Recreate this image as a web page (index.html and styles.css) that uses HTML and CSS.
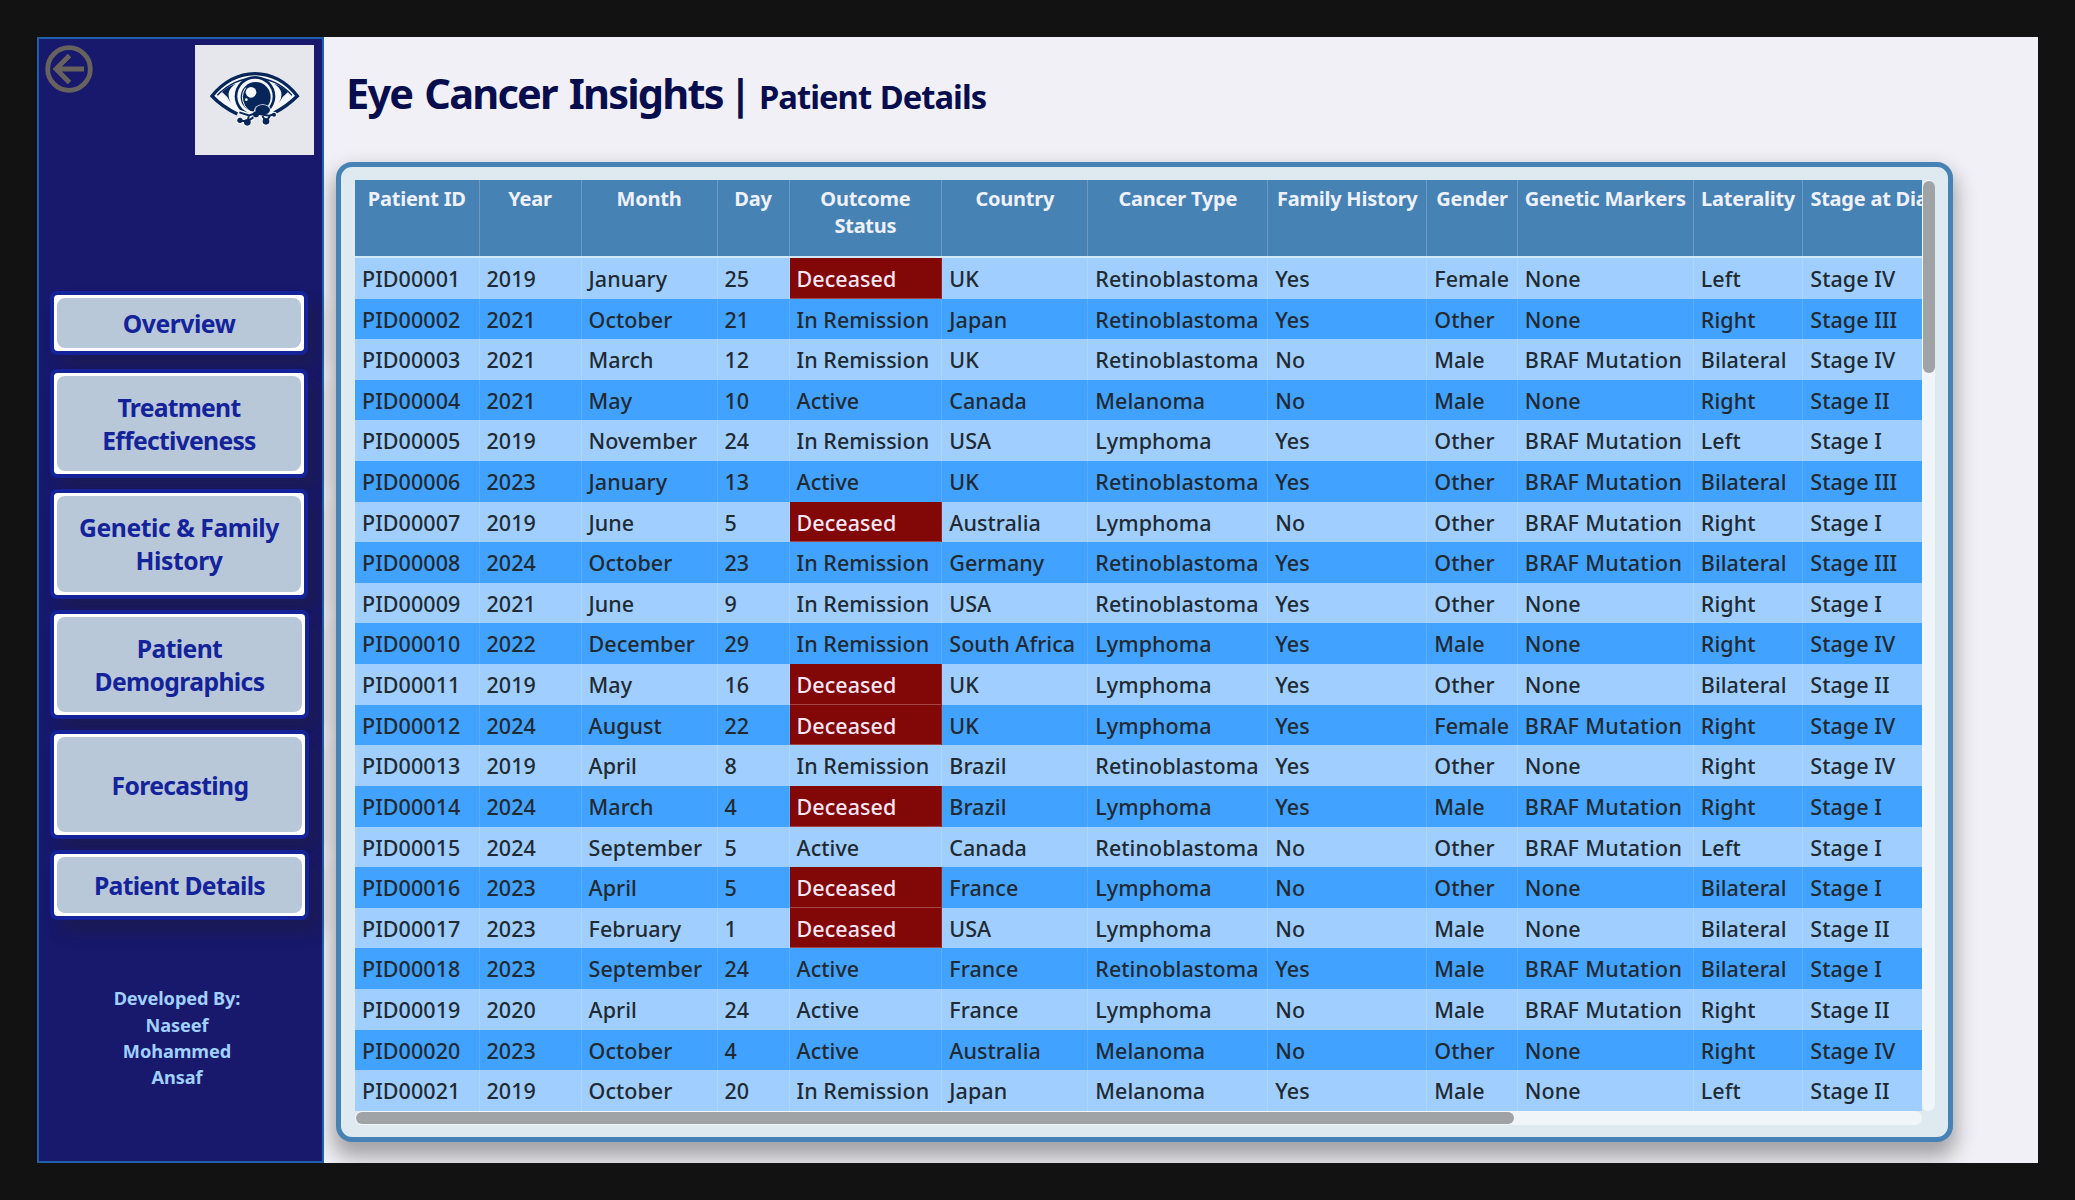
FILE: index.html
```html
<!DOCTYPE html>
<html lang="en">
<head>
<meta charset="utf-8">
<title>Eye Cancer Insights | Patient Details</title>
<link rel="stylesheet" href="styles.css">
</head>
<body>
<div class="report">
  <aside class="sidebar">
    <div class="brand">
      <svg class="back" viewBox="0 0 48 48" width="48" height="48"><circle cx="24" cy="24" r="21.3"/><path d="M39 24H11M24.5 10.5L11 24l13.500 13.500"/></svg>
      <svg class="logo" viewBox="-15 -45 357 330" width="119" height="110">
        <path class="sclera" d="M36 108Q90 42 165 41Q240 42 292 108Q262 138 214 162L165 172L112 162Q66 140 36 108Z"/>
        <path class="lid" d="M112 162Q66 140 36 108Q90 42 165 41Q240 42 292 108Q262 138 222 159"/>
        <path class="crease" d="M52 106Q100 56 165 54Q230 56 276 106"/>
        <path class="navy" d="M66 96Q84 78 108 71Q88 84 86 98Q84 112 93 128Q82 108 66 96Z"/>
        <path class="navy" d="M264 96Q246 78 222 71Q242 84 244 98Q246 112 237 128Q248 108 264 96Z"/>
        <circle class="navy" cx="165" cy="109" r="61"/>
        <circle class="white" cx="165" cy="109" r="53"/>
        <circle class="navy" cx="167" cy="111" r="45"/>
        <path class="rim" d="M137 83Q119 108 134 137Q140 147 150 154"/>
        <circle class="white" cx="153" cy="97" r="16"/>
        <circle class="white" cx="139" cy="119" r="4"/>
        <path class="halo" d="M118 157L147 166L166 160L187 151L207 162L222 163M147 166L143 184M120 182L143 184L160 172M187 168L198 184L210 168"/>
        <g class="white"><circle cx="120" cy="181" r="11"/><circle cx="142" cy="187" r="13"/><circle cx="198" cy="184" r="13"/><circle cx="222" cy="164" r="9"/><ellipse cx="188" cy="153" rx="26" ry="20"/></g>
        <path class="link" d="M118 157L147 166L166 160L207 167L222 163M147 166L143 184M120 182L143 184L160 172M187 168L198 184L210 168"/>
        <g class="navy"><circle cx="120" cy="181" r="8"/><circle cx="142" cy="187" r="10"/><circle cx="198" cy="184" r="10"/><circle cx="222" cy="164" r="6"/><ellipse cx="188" cy="150" rx="22" ry="15"/><circle cx="168" cy="163" r="9"/></g>
      </svg>
    </div>
    <nav class="menu">
      <a class="item single"><span>Overview</span></a>
      <a class="item treatment"><span>Treatment<br>Effectiveness</span></a>
      <a class="item family"><span>Genetic &amp; Family<br>History</span></a>
      <a class="item wide demo"><span>Patient<br>Demographics</span></a>
      <a class="item wide forecast"><span>Forecasting</span></a>
      <a class="item wide details"><span>Patient Details</span></a>
    </nav>
    <p class="credits">Developed By:<br>Naseef<br>Mohammed<br>Ansaf</p>
  </aside>
  <main class="page">
    <h1 class="title"><span class="name">Eye Cancer Insights</span><span class="bar">|</span><span class="sub">Patient Details</span></h1>
    <section class="panel">
      <div class="table">
        <div class="row head"><b>Patient ID</b><b>Year</b><b>Month</b><b>Day</b><b>Outcome<br>Status</b><b>Country</b><b>Cancer Type</b><b>Family History</b><b>Gender</b><b>Genetic Markers</b><b>Laterality</b><b>Stage at Diagnosis</b></div>
        <div class="row"><i>PID00001</i><i>2019</i><i>January</i><i>25</i><i class="dead">Deceased</i><i>UK</i><i>Retinoblastoma</i><i>Yes</i><i>Female</i><i>None</i><i>Left</i><i>Stage IV</i></div>
        <div class="row"><i>PID00002</i><i>2021</i><i>October</i><i>21</i><i>In Remission</i><i>Japan</i><i>Retinoblastoma</i><i>Yes</i><i>Other</i><i>None</i><i>Right</i><i>Stage III</i></div>
        <div class="row"><i>PID00003</i><i>2021</i><i>March</i><i>12</i><i>In Remission</i><i>UK</i><i>Retinoblastoma</i><i>No</i><i>Male</i><i class="braf">BRAF Mutation</i><i>Bilateral</i><i>Stage IV</i></div>
        <div class="row"><i>PID00004</i><i>2021</i><i>May</i><i>10</i><i>Active</i><i>Canada</i><i>Melanoma</i><i>No</i><i>Male</i><i>None</i><i>Right</i><i>Stage II</i></div>
        <div class="row"><i>PID00005</i><i>2019</i><i>November</i><i>24</i><i>In Remission</i><i>USA</i><i>Lymphoma</i><i>Yes</i><i>Other</i><i class="braf">BRAF Mutation</i><i>Left</i><i>Stage I</i></div>
        <div class="row"><i>PID00006</i><i>2023</i><i>January</i><i>13</i><i>Active</i><i>UK</i><i>Retinoblastoma</i><i>Yes</i><i>Other</i><i class="braf">BRAF Mutation</i><i>Bilateral</i><i>Stage III</i></div>
        <div class="row"><i>PID00007</i><i>2019</i><i>June</i><i>5</i><i class="dead">Deceased</i><i>Australia</i><i>Lymphoma</i><i>No</i><i>Other</i><i class="braf">BRAF Mutation</i><i>Right</i><i>Stage I</i></div>
        <div class="row"><i>PID00008</i><i>2024</i><i>October</i><i>23</i><i>In Remission</i><i>Germany</i><i>Retinoblastoma</i><i>Yes</i><i>Other</i><i class="braf">BRAF Mutation</i><i>Bilateral</i><i>Stage III</i></div>
        <div class="row"><i>PID00009</i><i>2021</i><i>June</i><i>9</i><i>In Remission</i><i>USA</i><i>Retinoblastoma</i><i>Yes</i><i>Other</i><i>None</i><i>Right</i><i>Stage I</i></div>
        <div class="row"><i>PID00010</i><i>2022</i><i>December</i><i>29</i><i>In Remission</i><i>South Africa</i><i>Lymphoma</i><i>Yes</i><i>Male</i><i>None</i><i>Right</i><i>Stage IV</i></div>
        <div class="row"><i>PID00011</i><i>2019</i><i>May</i><i>16</i><i class="dead">Deceased</i><i>UK</i><i>Lymphoma</i><i>Yes</i><i>Other</i><i>None</i><i>Bilateral</i><i>Stage II</i></div>
        <div class="row"><i>PID00012</i><i>2024</i><i>August</i><i>22</i><i class="dead">Deceased</i><i>UK</i><i>Lymphoma</i><i>Yes</i><i>Female</i><i class="braf">BRAF Mutation</i><i>Right</i><i>Stage IV</i></div>
        <div class="row"><i>PID00013</i><i>2019</i><i>April</i><i>8</i><i>In Remission</i><i>Brazil</i><i>Retinoblastoma</i><i>Yes</i><i>Other</i><i>None</i><i>Right</i><i>Stage IV</i></div>
        <div class="row"><i>PID00014</i><i>2024</i><i>March</i><i>4</i><i class="dead">Deceased</i><i>Brazil</i><i>Lymphoma</i><i>Yes</i><i>Male</i><i class="braf">BRAF Mutation</i><i>Right</i><i>Stage I</i></div>
        <div class="row"><i>PID00015</i><i>2024</i><i>September</i><i>5</i><i>Active</i><i>Canada</i><i>Retinoblastoma</i><i>No</i><i>Other</i><i class="braf">BRAF Mutation</i><i>Left</i><i>Stage I</i></div>
        <div class="row"><i>PID00016</i><i>2023</i><i>April</i><i>5</i><i class="dead">Deceased</i><i>France</i><i>Lymphoma</i><i>No</i><i>Other</i><i>None</i><i>Bilateral</i><i>Stage I</i></div>
        <div class="row"><i>PID00017</i><i>2023</i><i>February</i><i>1</i><i class="dead">Deceased</i><i>USA</i><i>Lymphoma</i><i>No</i><i>Male</i><i>None</i><i>Bilateral</i><i>Stage II</i></div>
        <div class="row"><i>PID00018</i><i>2023</i><i>September</i><i>24</i><i>Active</i><i>France</i><i>Retinoblastoma</i><i>Yes</i><i>Male</i><i class="braf">BRAF Mutation</i><i>Bilateral</i><i>Stage I</i></div>
        <div class="row"><i>PID00019</i><i>2020</i><i>April</i><i>24</i><i>Active</i><i>France</i><i>Lymphoma</i><i>No</i><i>Male</i><i class="braf">BRAF Mutation</i><i>Right</i><i>Stage II</i></div>
        <div class="row"><i>PID00020</i><i>2023</i><i>October</i><i>4</i><i>Active</i><i>Australia</i><i>Melanoma</i><i>No</i><i>Other</i><i>None</i><i>Right</i><i>Stage IV</i></div>
        <div class="row"><i>PID00021</i><i>2019</i><i>October</i><i>20</i><i>In Remission</i><i>Japan</i><i>Melanoma</i><i>Yes</i><i>Male</i><i>None</i><i>Left</i><i>Stage II</i></div>
      </div>
      <div class="track vertical"><div class="thumb"></div></div>
      <div class="track horizontal"><div class="thumb"></div></div>
    </section>
  </main>
</div>
</body>
</html>
```
FILE: styles.css
```css
* { box-sizing: border-box; }

body {
  margin: 0;
  padding: 37px;
  height: 1200px;
  overflow: hidden;
  background: #121212;
  font-family: "Noto Sans", "Open Sans", sans-serif;
}

.report {
  display: flex;
  width: 2001px;
  height: 1126px;
  overflow: hidden;
  background: #f1f0f6;
}

/* Sidebar */
.sidebar {
  position: relative;
  z-index: 1;
  flex: none;
  width: 287px;
  padding: 6px 8px 0 6px;
  border: 2px solid #1f5fab;
  background: #18186c;
}

.brand {
  display: flex;
  justify-content: space-between;
  height: 110px;
}

.back { fill: none; stroke: #68625f; stroke-width: 4.8; }
.logo { background: #e5e7ec; }
.navy { fill: #06265a; }
.white { fill: #f6f7fb; }
.sclera { fill: #f6f7fb; }
.lid { fill: none; stroke: #06265a; stroke-width: 10; }
.crease { fill: none; stroke: #06265a; stroke-width: 4; }
.rim { fill: none; stroke: #f6f7fb; stroke-width: 3; }
.halo { fill: none; stroke: #f6f7fb; stroke-width: 14; }
.link { fill: none; stroke: #06265a; stroke-width: 6; }

.menu {
  display: flex;
  flex-direction: column;
  align-items: flex-start;
  gap: 11px;
  padding: 136px 0 0 5px;
}

.item {
  display: flex;
  width: 258px;
  height: 109.300px;
  padding: 3px;
  border: 4.500px solid #14239a;
  border-radius: 7px;
  background: #fff;
  background-clip: padding-box;
  box-shadow: 10px 12px 16px rgba(32, 32, 32, .3);
  color: #14239a;
  font-size: 24.700px;
  font-weight: 700;
  line-height: 33px;
  letter-spacing: -.45px;
  text-align: center;
}

.item span {
  display: flex;
  flex: 1;
  align-items: center;
  justify-content: center;
  border-radius: 8px;
  background: #b9c8d9;
}

.item.single { height: 64px; margin-bottom: 3px; }
.item.treatment { letter-spacing: -.72px; }
.item.family { letter-spacing: -.43px; }
.item.wide { width: 259px; }
.item.demo { letter-spacing: -.62px; }
.item.demo span { padding-top: 2px; }
.item.forecast { letter-spacing: -.65px; }
.item.forecast span { padding: 2px 0 0 1px; }
.item.details { height: 70px; letter-spacing: -.7px; }

.credits {
  margin: 65px 0 0;
  padding-right: 5px;
  color: #a0d0ff;
  font-size: 18.200px;
  font-weight: 700;
  line-height: 26.400px;
  letter-spacing: -.1px;
  text-align: center;
}

/* Page */
.page { flex: 1; padding: 0 0 0 12px; }

.title {
  display: flex;
  align-items: baseline;
  height: 125px;
  margin: 0;
  padding: 28px 0 0 10px;
  color: #070d4d;
  font-size: 41.500px;
  font-weight: 700;
  line-height: 56px;
  white-space: nowrap;
}

.name { width: 383px; letter-spacing: -1.800px; word-spacing: 3px; }
.bar { width: 30px; }
.sub { font-size: 32.700px; letter-spacing: -.950px; word-spacing: 1px; }

.panel {
  display: grid;
  grid-template: 931.500px 14px / 1567px 13px;
  width: 1617px;
  height: 980px;
  padding: 12.500px 14px;
  border: 5px solid #4682b4;
  border-radius: 16px;
  background: #dfe9f0;
  box-shadow: 0 12px 20px 3px rgba(34, 34, 34, .38);
}

/* Table */
.table { overflow: hidden; }

.row {
  display: grid;
  grid-template: 100% / 124.500px 102px 136px 72px 152.800px 146px 180px 159px 90.500px 176px 109.500px 195px;
  width: max-content;
  height: 40.620px;
  background: #a0cfff;
  color: #212a33;
  font-size: 21.500px;
  font-weight: 500;
  line-height: 42.800px;
  letter-spacing: .05px;
  white-space: nowrap;
}

.row:nth-child(odd) { background: #41a2ff; }
.row i {
  padding-left: 7px;
  border-right: 1px solid rgba(255, 255, 255, .13);
  font-style: normal;
}
.row .dead {
  background: #820707;
  color: #f5e6f3;
  box-shadow: inset 0 -1px rgba(255, 255, 255, .25);
}
.row .braf { letter-spacing: .35px; }

.row.head {
  height: 78.500px;
  border-bottom: 2px solid #d2e9fb;
  background: #4682b4;
  color: #eef1fb;
  font-size: 20px;
  line-height: 27px;
  letter-spacing: -.240px;
  text-align: center;
}
.head b {
  padding-top: 5px;
  border-right: 1px solid rgba(255, 255, 255, .2);
  font-weight: 700;
}

/* Scroll bars */
.track { border-radius: 7px; background: #f0f5f9; }
.vertical { padding: 1.500px 0 0 1px; }
.vertical .thumb { height: 192px; }
.horizontal { padding: 1px 0 0 1px; }
.horizontal .thumb { width: 1158px; height: 12px; }
.thumb { border-radius: 6px; background: #9fa3a6; }
```
